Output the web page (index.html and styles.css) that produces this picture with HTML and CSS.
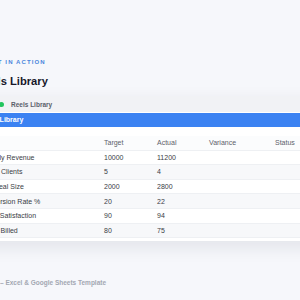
FILE: index.html
```html
<!DOCTYPE html>
<html>
<head>
<meta charset="utf-8">
<link rel="stylesheet" href="styles.css">
</head>
<body>
<div class="page">
  <div class="eyebrow">SEE IT IN ACTION</div>
  <h1 class="title">Reels Library</h1>
  <div class="card">
    <div class="titlebar">
      <span class="dot red"></span><span class="dot yellow"></span><span class="dot green"></span>
      <span class="wintitle">Reels Library</span>
    </div>
    <div class="bluebar">Reels Library</div>
    <div class="table">
      <div class="row head"><div>Metric</div><div>Target</div><div>Actual</div><div>Variance</div><div>Status</div></div>
      <div class="row"><div>Monthly Revenue</div><div>10000</div><div>11200</div><div></div><div></div></div>
      <div class="row alt"><div>Active Clients</div><div>5</div><div>4</div><div></div><div></div></div>
      <div class="row"><div>Avg Deal Size</div><div>2000</div><div>2800</div><div></div><div></div></div>
      <div class="row alt"><div>Conversion Rate %</div><div>20</div><div>22</div><div></div><div></div></div>
      <div class="row"><div>Client Satisfaction</div><div>90</div><div>94</div><div></div><div></div></div>
      <div class="row alt"><div>Hours Billed</div><div>80</div><div>75</div><div></div><div></div></div>
    </div>
  </div>
  <div class="footer">Reels Library – Excel &amp; Google Sheets Template</div>
</div>
</body>
</html>
```
FILE: styles.css
```css
html, body {
  margin: 0;
  padding: 0;
  background: #f6f7fb;
  font-family: "Liberation Sans", Arial, sans-serif;
  overflow: hidden;
}
.page {
  margin-left: -23px;
  padding-top: 58px;
  width: 420px;
}
.eyebrow {
  font-size: 6px;
  line-height: 8px;
  font-weight: 700;
  letter-spacing: 1.1px;
  color: #4a86dc;
}
.title {
  margin: 8px 0 0 0;
  font-size: 11.2px;
  line-height: 14px;
  font-weight: 700;
  color: #16182a;
}
.card {
  margin: 8px 0 0 -9px;
  background: #ffffff;
  border-radius: 6px;
  box-shadow: 0 6px 18px rgba(20, 30, 60, 0.09);
  padding-bottom: 3px;
}
.titlebar {
  height: 16px;
  background: #f1f2f5;
  border-radius: 6px 6px 0 0;
  display: flex;
  align-items: center;
  padding-left: 15px;
  gap: 3px;
}
.dot {
  width: 5px;
  height: 5px;
  border-radius: 50%;
}
.red { background: #ef4444; }
.yellow { background: #f5b83d; }
.green { background: #22c55e; }
.wintitle {
  margin-left: 4px;
  font-size: 6.5px;
  color: #5b5f6b;
  font-weight: 600;
}
.bluebar {
  margin-top: 1px;
  height: 14px;
  line-height: 14px;
  background: #3b82f2;
  color: #ffffff;
  font-size: 7px;
  font-weight: 700;
  padding-left: 11px;
}
.table {
  margin-top: 9px;
}
.row {
  display: grid;
  grid-template-columns: 124px 53px 52px 66px 1fr;
  height: 14.6px;
  align-items: center;
  font-size: 7px;
  color: #3a3d45;
  border-bottom: 1px solid #eef0f3;
  box-sizing: border-box;
  padding-left: 12px;
}
.row.head {
  color: #5d616b;
  background: #fbfcfd;
}
.row.alt {
  background: #f7f8fa;
}
.footer {
  margin: 37px 0 0 -20px;
  font-size: 6.5px;
  line-height: 10px;
  font-weight: 700;
  color: #a3a7b2;
}
```
